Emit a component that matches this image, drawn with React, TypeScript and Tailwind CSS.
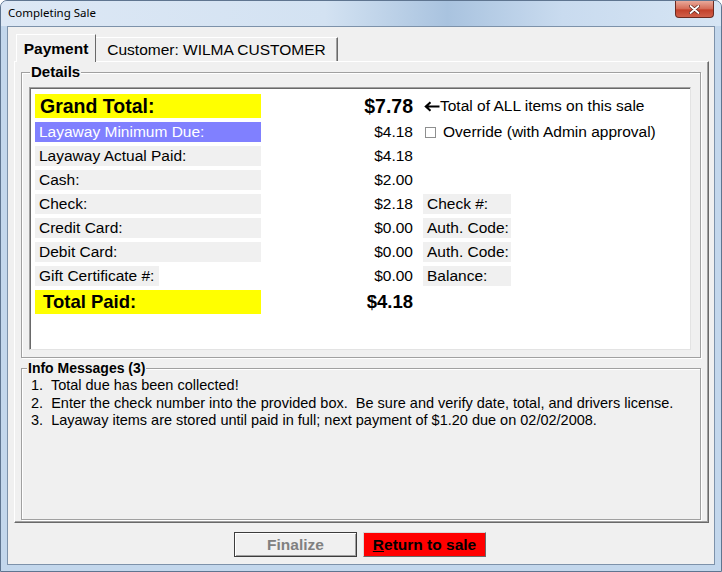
import type { ReactNode } from 'react';

type Row = {
  label: string;
  value: string;
  blue?: boolean;
  narrow?: boolean;
  extra?: ReactNode;
};

function SideBox({ children }: { children: ReactNode }) {
  return <div className="w-[88px] h-[20px] bg-[#f0f0f0] pl-[4px]">{children}</div>;
}

const rows: Row[] = [
  {
    label: 'Layaway Minimum Due:',
    value: '$4.18',
    blue: true,
    extra: (
      <div className="flex items-center">
        <span className="ml-[2px] inline-block w-[11px] h-[11px] border border-[#8e8f8f] bg-white" />
        <span className="ml-[7px]">Override (with Admin approval)</span>
      </div>
    ),
  },
  { label: 'Layaway Actual Paid:', value: '$4.18' },
  { label: 'Cash:', value: '$2.00' },
  { label: 'Check:', value: '$2.18', extra: <SideBox>Check #:</SideBox> },
  { label: 'Credit Card:', value: '$0.00', extra: <SideBox>Auth. Code:</SideBox> },
  { label: 'Debit Card:', value: '$0.00', extra: <SideBox>Auth. Code:</SideBox> },
  { label: 'Gift Certificate #:', value: '$0.00', narrow: true, extra: <SideBox>Balance:</SideBox> },
];

const messages = [
  '1.  Total due has been collected!',
  '2.  Enter the check number into the provided box.  Be sure and verify date, total, and drivers license.',
  '3.  Layaway items are stored until paid in full; next payment of $1.20 due on 02/02/2008.',
];

export default function App() {
  return (
    <div className="w-[722px] h-[572px] flex flex-col overflow-hidden rounded-t-[7px] border border-[#5f7590] bg-[#c3d7ec] text-black font-['Liberation_Sans',Arial,sans-serif]">
      {/* title bar */}
      <div className="h-[25px] shrink-0 flex justify-between items-start bg-[linear-gradient(90deg,#dde8f5_0%,#d3e2f2_45%,#a9c3df_62%,#c9dbef_78%,#d6e5f4_100%)]">
        <span className="pl-[7px] pt-[5px] text-[11.5px] leading-[14px] font-['Noto_Sans',sans-serif] text-black">
          Completing Sale
        </span>
        <div className="mr-[7px] w-[39px] h-[17px] flex items-center justify-center rounded-b-[4px] border border-t-0 border-[#6b2a20] bg-[linear-gradient(180deg,#e9a99a_0%,#d46a55_50%,#c2402a_55%,#d0604a_100%)]">
          <svg width="11" height="9" viewBox="0 0 11 9">
            <path d="M1.5 1 L9.5 8 M9.5 1 L1.5 8" stroke="#5a2018" strokeWidth="3.2" strokeLinecap="round" />
            <path d="M1.5 1 L9.5 8 M9.5 1 L1.5 8" stroke="#ffffff" strokeWidth="1.8" strokeLinecap="round" />
          </svg>
        </div>
      </div>

      {/* client area */}
      <div className="mx-[6px] mb-[6px] flex-1 flex flex-col border border-[#7d92aa] bg-[#f0f0f0] pt-[7px]">
        {/* tabs */}
        <div className="ml-[8px] h-[27px] flex items-end">
          <div className="relative z-10 -mb-[1px] w-[80px] h-[28px] flex items-center justify-center border-l border-t border-r border-l-white border-t-white border-r-[#696969] bg-[#f0f0f0] text-[15.5px] font-bold leading-[18px]">
            Payment
          </div>
          <div className="w-[242px] h-[24px] flex items-center justify-center border-t border-r border-t-white border-r-[#696969] shadow-[inset_-1px_0_0_#a0a0a0] text-[15.5px] leading-[18px]">
            Customer: WILMA CUSTOMER
          </div>
        </div>

        {/* tab page */}
        <div className="ml-[6px] w-[695px] h-[462px] flex flex-col border-l border-t border-r border-b border-l-white border-t-white border-r-[#696969] border-b-[#696969] shadow-[inset_-1px_-1px_0_#a0a0a0] pt-[2px]">
          {/* details group */}
          <fieldset className="ml-[6px] w-[680px] border border-[#a0a0a0] shadow-[inset_1px_1px_0_#fff,1px_1px_0_#fff] pl-[7px] pt-[7px] pb-[7px]">
            <legend className="ml-[1px] px-[1px] bg-[#f0f0f0] text-[15px] font-bold leading-[16px]">Details</legend>
            <div className="w-[662px] h-[263px] bg-white border border-t-[#a0a0a0] border-l-[#a0a0a0] border-r-[#e3e3e3] border-b-[#e3e3e3] shadow-[inset_1px_1px_0_#696969] pl-[5px] pt-[6px] flex flex-col gap-[4px] text-[15.5px] leading-[20px]">
              {/* grand total */}
              <div className="h-[24px] flex items-center">
                <div className="w-[226px] h-[24px] bg-[#ffff00] pl-[5px] text-[19.5px] font-bold leading-[24px]">Grand Total:</div>
                <div className="w-[152px] text-right text-[19.5px] font-bold leading-[24px]">$7.78</div>
                <div className="ml-[11px] flex items-center">
                  <svg width="16" height="11" viewBox="0 0 16 11">
                    <path d="M15.5 5.5 H2.5 M6.5 1.2 L1.8 5.5 L6.5 9.8" fill="none" stroke="#000" strokeWidth="2.1" />
                  </svg>
                  <span className="leading-[20px]">Total of ALL items on this sale</span>
                </div>
              </div>

              {rows.map((r) => (
                <div key={r.label} className="h-[20px] flex items-center">
                  <div className="w-[226px] h-[20px]">
                    <div
                      className={
                        r.blue
                          ? 'w-[226px] h-[20px] bg-[#8080ff] text-white pl-[4px]'
                          : r.narrow
                          ? 'w-[124px] h-[20px] bg-[#f0f0f0] pl-[4px]'
                          : 'w-[226px] h-[20px] bg-[#f0f0f0] pl-[4px]'
                      }
                    >
                      {r.label}
                    </div>
                  </div>
                  <div className="w-[152px] text-right">{r.value}</div>
                  <div className="ml-[10px]">{r.extra}</div>
                </div>
              ))}

              {/* total paid */}
              <div className="h-[24px] flex items-center">
                <div className="w-[226px] h-[24px] bg-[#ffff00] pl-[8px] text-[18.5px] font-bold leading-[24px]">Total Paid:</div>
                <div className="w-[152px] text-right text-[18.5px] font-bold leading-[24px]">$4.18</div>
              </div>
            </div>
          </fieldset>

          {/* info messages group */}
          <fieldset className="mt-[3px] mb-[2px] ml-[6px] w-[680px] flex-1 min-h-0 border border-[#a0a0a0] shadow-[inset_1px_1px_0_#fff,1px_1px_0_#fff] pl-[7px]">
            <legend className="-ml-[2px] px-[1px] bg-[#f0f0f0] text-[14px] font-bold leading-[15px]">Info Messages (3)</legend>
            <div className="pt-[1px] pl-[2px] text-[14.5px] leading-[17.5px]">
              {messages.map((m) => (
                <div key={m} className="whitespace-pre">{m}</div>
              ))}
            </div>
          </fieldset>
        </div>

        {/* buttons */}
        <div className="mt-[9px] h-[25px] flex justify-center gap-[6px] pr-[2px]">
          <div className="w-[123px] h-[25px] flex items-center justify-center border border-[#3c3c3c] shadow-[inset_1px_1px_0_#fff,inset_-1px_-1px_0_#a0a0a0] bg-[#f0f0f0] text-[15.5px] font-bold text-[#808080]">
            Finalize
          </div>
          <div className="w-[123px] h-[25px] flex items-center justify-center border border-t-[#d8d8d8] border-l-[#d8d8d8] border-r-[#696969] border-b-[#696969] bg-[#ff0000] text-[15.5px] font-bold text-black">
            <span>
              <span className="underline">R</span>eturn to sale
            </span>
          </div>
        </div>
      </div>
    </div>
  );
}
